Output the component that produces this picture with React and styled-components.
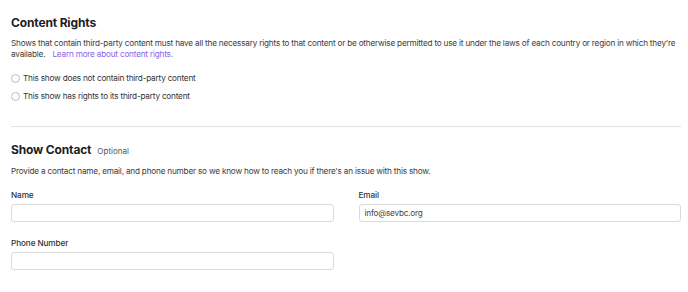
import React from 'react';
import styled, { createGlobalStyle } from 'styled-components';

const GlobalStyle = createGlobalStyle`
  html, body {
    margin: 0;
    padding: 0;
    background: #fff;
  }
  body {
    font-family: Inter, "Noto Sans", sans-serif;
    -webkit-font-smoothing: antialiased;
  }
`;

const Page = styled.div`
  width: 688px;
  box-sizing: border-box;
  padding: 15px 7px 0 11px;
`;

const Section = styled.section`
  display: flex;
  flex-direction: column;
`;

const TitleRow = styled.div`
  display: flex;
  align-items: baseline;
  gap: 6px;
`;

const Title = styled.h2`
  margin: 0;
  font-size: 12px;
  line-height: 15px;
  font-weight: 700;
  color: #1d1d1f;
  letter-spacing: -0.15px;
`;

const Optional = styled.span`
  font-size: 8px;
  color: #555;
`;

const Text = styled.p`
  margin: ${(p) => p.$mt || 0}px 0 0;
  font-size: 8.2px;
  line-height: 11px;
  letter-spacing: -0.2px;
  color: #3c3c3c;
`;

const Link = styled.a`
  color: #8b63e6;
  text-decoration: none;
  margin-left: 5px;
`;

const RadioList = styled.div`
  display: flex;
  flex-direction: column;
  gap: 7px;
  margin-top: 13px;
`;

const RadioRow = styled.label`
  display: flex;
  align-items: center;
  gap: 3px;
  font-size: 8.2px;
  letter-spacing: -0.2px;
  color: #333;
  line-height: 11px;
`;

const RadioCircle = styled.span`
  box-sizing: border-box;
  width: 9px;
  height: 9px;
  border: 1px solid #bcbcbc;
  border-radius: 50%;
  background: #fff;
`;

const Divider = styled.hr`
  border: none;
  border-top: 1px solid #e3e3e3;
  margin: 24px 0 15px;
`;

const Grid = styled.div`
  display: grid;
  grid-template-columns: 1fr 1fr;
  column-gap: 25px;
  row-gap: 16px;
  margin-top: 13px;
`;

const Field = styled.div`
  display: flex;
  flex-direction: column;
  gap: 3px;
`;

const Label = styled.span`
  font-size: 8.2px;
  font-weight: 500;
  letter-spacing: -0.1px;
  color: #333;
  line-height: 11px;
`;

const Input = styled.div`
  box-sizing: border-box;
  height: 18px;
  border: 1px solid #dadada;
  border-radius: 3px;
  padding: 0 5px;
  font-size: 8.2px;
  letter-spacing: -0.2px;
  color: #444;
  display: flex;
  align-items: center;
`;

const options = [
  'This show does not contain third-party content',
  'This show has rights to its third-party content',
];

const fields = [
  { label: 'Name', value: '' },
  { label: 'Email', value: 'info@sevbc.org' },
  { label: 'Phone Number', value: '' },
];

const App = () => {
  return (
    <Page>
      <GlobalStyle />
      <Section>
        <Title>Content Rights</Title>
        <Text $mt={8}>
          Shows that contain third-party content must have all the necessary rights to that content or be
          otherwise permitted to use it under the laws of each country or region in which they're available.{' '}
          <Link href="#">Learn more about content rights.</Link>
        </Text>
        <RadioList>
          {options.map((o) => (
            <RadioRow key={o}>
              <RadioCircle />
              {o}
            </RadioRow>
          ))}
        </RadioList>
      </Section>
      <Divider />
      <Section>
        <TitleRow>
          <Title>Show Contact</Title>
          <Optional>Optional</Optional>
        </TitleRow>
        <Text $mt={9}>
          Provide a contact name, email, and phone number so we know how to reach you if there's an issue with this show.
        </Text>
        <Grid>
          {fields.map((f) => (
            <Field key={f.label}>
              <Label>{f.label}</Label>
              <Input>{f.value}</Input>
            </Field>
          ))}
        </Grid>
      </Section>
    </Page>
  );
};

export default App;
